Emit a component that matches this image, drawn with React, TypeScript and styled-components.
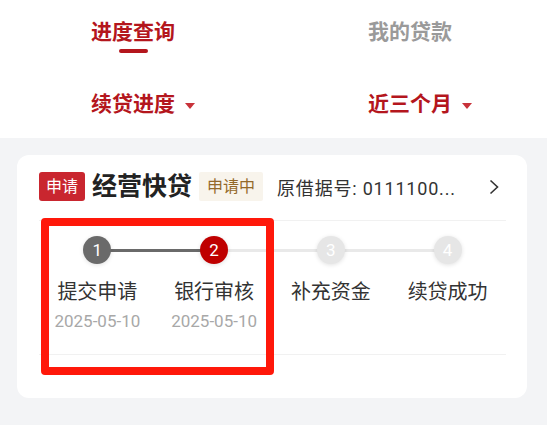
import React from 'react'
import styled, { createGlobalStyle } from 'styled-components'

const GlobalStyle = createGlobalStyle`
  body {
    margin: 0;
    background: #f3f4f6;
    font-family: Roboto, "Noto Sans CJK SC", sans-serif;
  }
`

const Page = styled.div`
  width: 547px;
  height: 425px;
  overflow: hidden;
`

const Header = styled.div`
  background: #fff;
  height: 138px;
`

const TabRow = styled.div`
  display: grid;
  grid-template-columns: 277px 1fr;
  padding: 22px 0 0 91px;
  height: 31px;
`

const Tab = styled.div<{ $active?: boolean }>`
  display: flex;
  flex-direction: column;
  align-items: center;
  width: fit-content;
  font-size: 21px;
  line-height: 21px;
  font-weight: 700;
  color: ${(p) => (p.$active ? '#b4161d' : '#9a9a9a')};
`

const Underline = styled.div`
  width: 29px;
  height: 4px;
  border-radius: 2px;
  margin-top: 6px;
  background: #b4161d;
`

const FilterRow = styled.div`
  display: grid;
  grid-template-columns: 277px 1fr;
  padding: 41px 0 0 91px;
`

const Filter = styled.div`
  display: flex;
  align-items: center;
  gap: 10px;
  font-size: 21px;
  line-height: 21px;
  font-weight: 700;
  color: #b4161d;
`

const Caret = styled.span`
  width: 0;
  height: 0;
  border-left: 5px solid transparent;
  border-right: 5px solid transparent;
  border-top: 6px solid #c8323a;
  margin-top: 2px;
`

const Card = styled.div`
  position: relative;
  margin: 17px 20px 0 17px;
  padding: 17px 21px 43px 22px;
  background: #fff;
  border-radius: 12px;
`

const CardHead = styled.div`
  display: flex;
  align-items: center;
  height: 29px;
`

const TypeTag = styled.span`
  height: 29px;
  line-height: 29px;
  padding: 0 7px;
  font-size: 16px;
  color: #fff;
  background: #c9262f;
  border-radius: 3px;
`

const Title = styled.span`
  margin: 0 7px;
  font-size: 25px;
  line-height: 29px;
  font-weight: 700;
  color: #222;
`

const StatusTag = styled.span`
  height: 29px;
  line-height: 29px;
  padding: 0 8px;
  font-size: 16px;
  color: #94692a;
  background: #f8f4ec;
  border-radius: 2px;
`

const LoanNo = styled.span`
  margin-left: 14px;
  font-size: 18px;
  letter-spacing: 0.8px;
  color: #333;
  white-space: nowrap;
`

const Chevron = styled.svg`
  margin-left: auto;
  margin-right: 7px;
`

const Divider = styled.div<{ $top?: number }>`
  height: 1px;
  background: #f1f1f1;
  margin-top: ${(p) => p.$top ?? 0}px;
`

const Steps = styled.div`
  display: grid;
  grid-template-columns: repeat(4, 1fr);
  padding: 15px 0 23px;
`

const Step = styled.div<{ $line?: 'done' | 'todo' }>`
  position: relative;
  display: flex;
  flex-direction: column;
  align-items: center;

  &::after {
    content: '';
    display: ${(p) => (p.$line ? 'block' : 'none')};
    position: absolute;
    top: 13px;
    left: 50%;
    width: 100%;
    height: 3px;
    background: ${(p) => (p.$line === 'done' ? '#6a6a6a' : '#e9e9e9')};
  }
`

const circleBg = {
  done: '#6a6a6a',
  current: '#bf0000',
  todo: '#e6e6e6',
}

const Circle = styled.div<{ $state: 'done' | 'current' | 'todo' }>`
  position: relative;
  z-index: 1;
  width: 28px;
  height: 28px;
  border-radius: 50%;
  display: flex;
  align-items: center;
  justify-content: center;
  font-size: 17px;
  color: #fff;
  background: ${(p) => circleBg[p.$state]};
  box-shadow: 0 1px 4px rgba(0, 0, 0, 0.12);
`

const StepLabel = styled.div`
  margin-top: 18px;
  font-size: 20px;
  line-height: 20px;
  color: #333;
`

const StepDate = styled.div`
  margin-top: 9px;
  font-size: 17px;
  line-height: 20px;
  color: #a8a8a8;
`

const Highlight = styled.div`
  position: absolute;
  left: 24px;
  top: 63px;
  width: 233px;
  height: 157px;
  box-sizing: border-box;
  border: 8px solid #ff180a;
  border-radius: 4px;
`

interface StepItem {
  label: string
  date?: string
  state: 'done' | 'current' | 'todo'
  line?: 'done' | 'todo'
}

const steps: StepItem[] = [
  { label: '提交申请', date: '2025-05-10', state: 'done', line: 'done' },
  { label: '银行审核', date: '2025-05-10', state: 'current', line: 'todo' },
  { label: '补充资金', state: 'todo', line: 'todo' },
  { label: '续贷成功', state: 'todo' },
]

const App = () => {
  return (
    <Page>
      <GlobalStyle />
      <Header>
        <TabRow>
          <Tab $active>
            进度查询
            <Underline />
          </Tab>
          <Tab>我的贷款</Tab>
        </TabRow>
        <FilterRow>
          <Filter>
            续贷进度
            <Caret />
          </Filter>
          <Filter>
            近三个月
            <Caret />
          </Filter>
        </FilterRow>
      </Header>

      <Card>
        <CardHead>
          <TypeTag>申请</TypeTag>
          <Title>经营快贷</Title>
          <StatusTag>申请中</StatusTag>
          <LoanNo>原借据号: 0111100...</LoanNo>
          <Chevron width="10" height="16" viewBox="0 0 10 16">
            <polyline
              points="1.5,1.5 8.5,8 1.5,14.5"
              fill="none"
              stroke="#333"
              strokeWidth="1.6"
            />
          </Chevron>
        </CardHead>
        <Divider $top={19} />
        <Steps>
          {steps.map((s, i) => (
            <Step key={s.label} $line={s.line}>
              <Circle $state={s.state}>{i + 1}</Circle>
              <StepLabel>{s.label}</StepLabel>
              {s.date && <StepDate>{s.date}</StepDate>}
            </Step>
          ))}
        </Steps>
        <Divider />
        <Highlight />
      </Card>
    </Page>
  )
}

export default App
